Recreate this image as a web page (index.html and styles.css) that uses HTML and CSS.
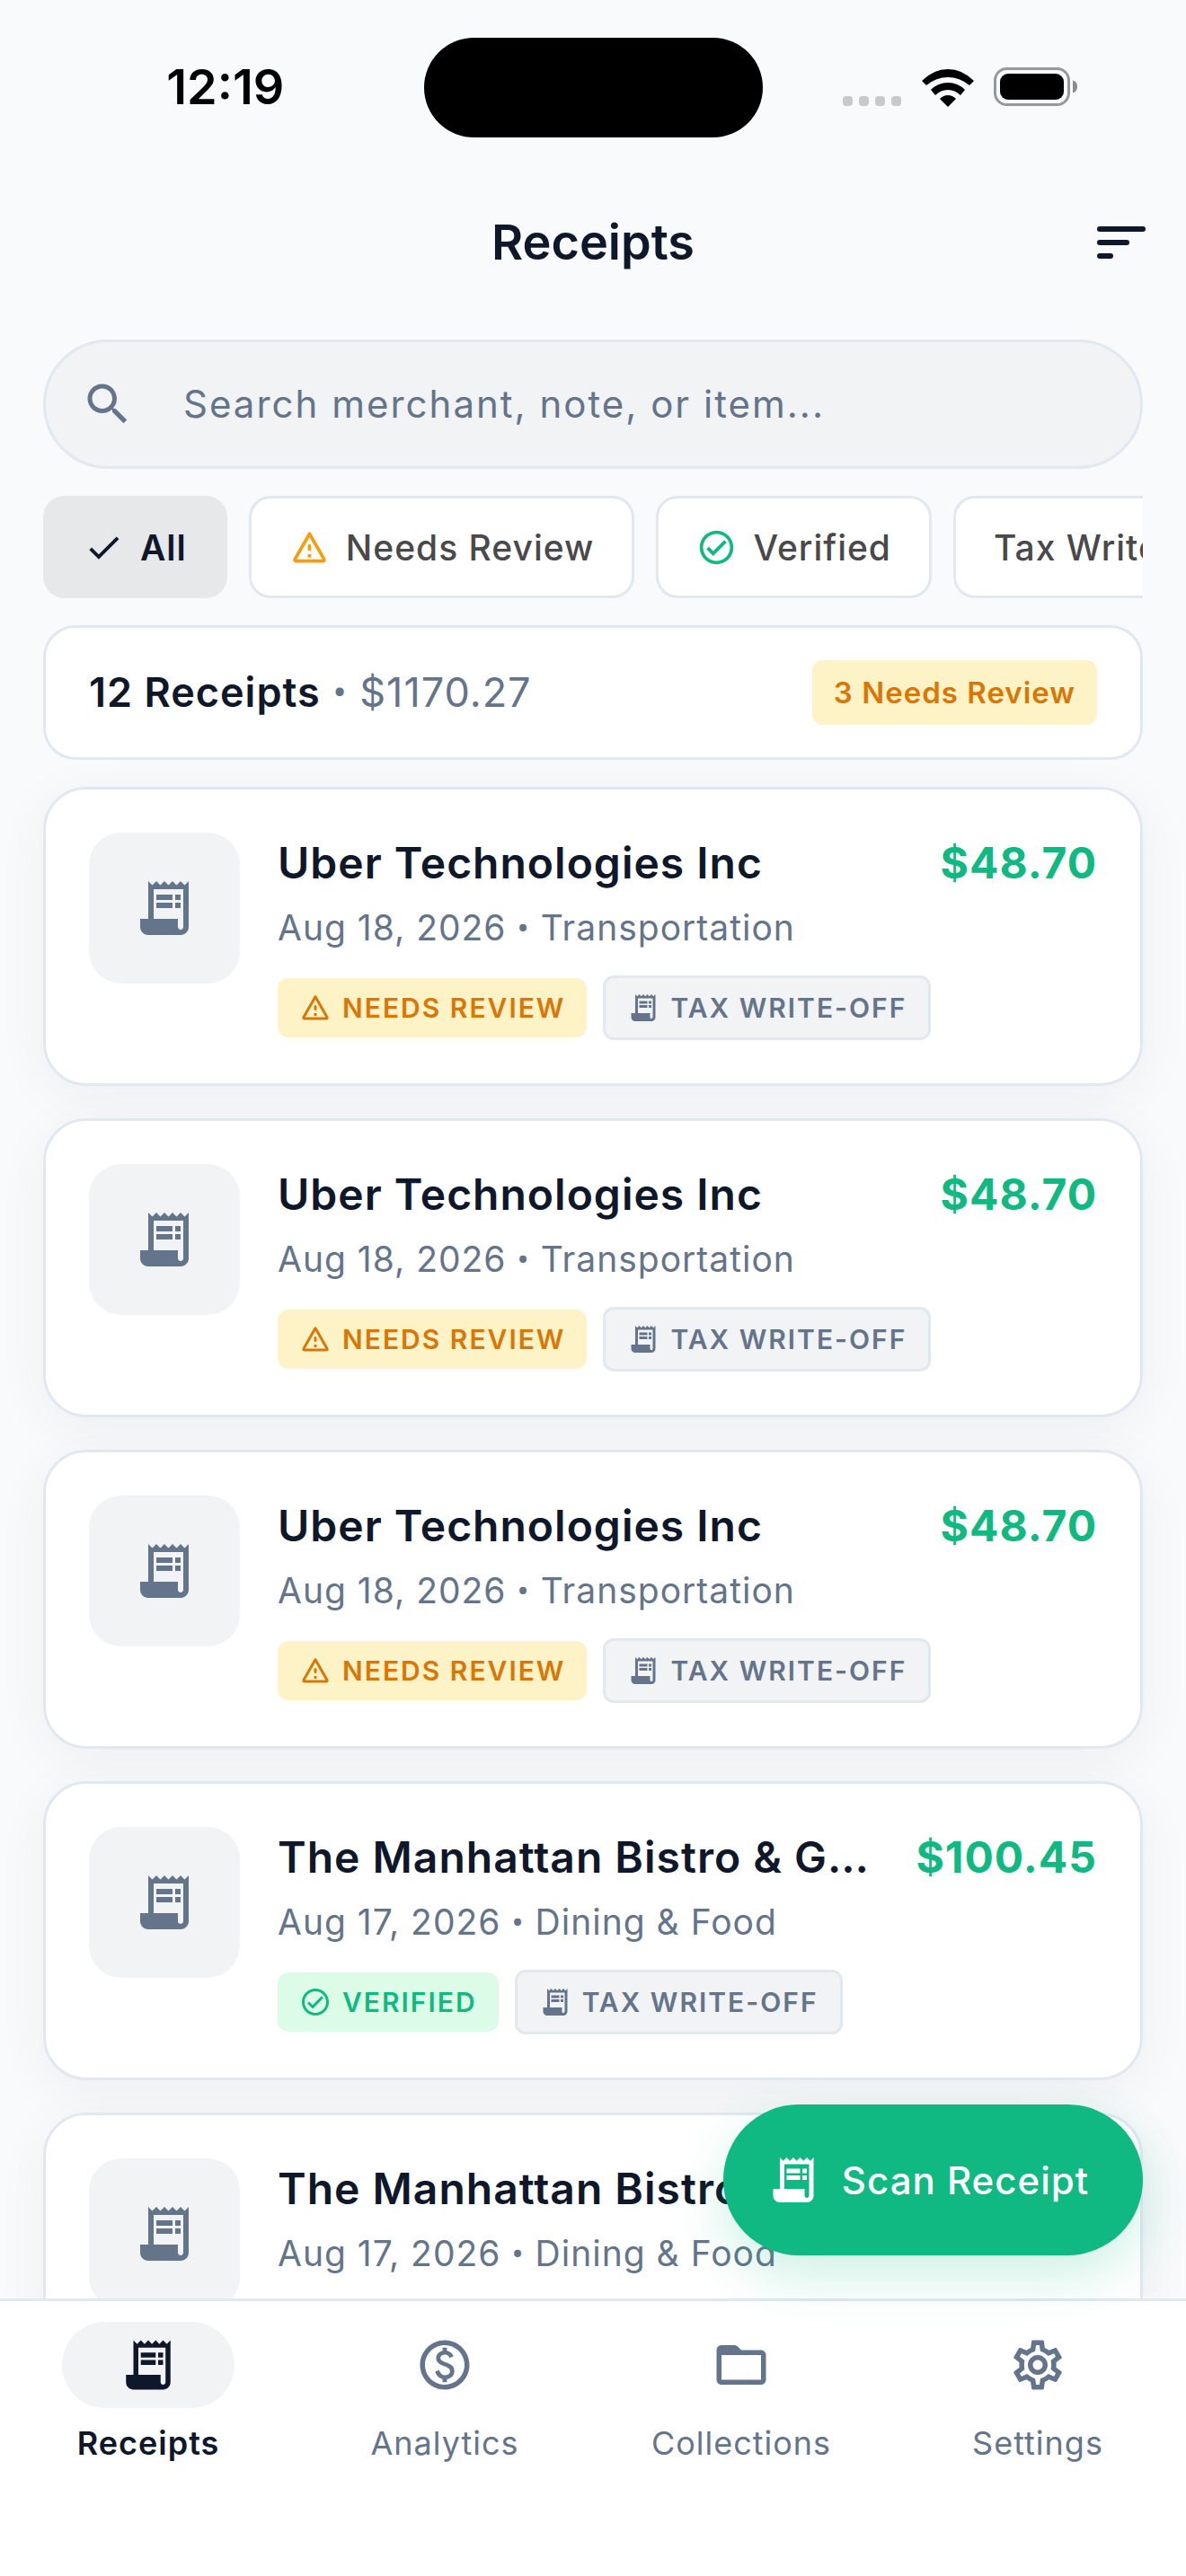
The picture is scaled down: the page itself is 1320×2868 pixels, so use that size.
FILE: index.html
```html
<!DOCTYPE html>
<html lang="en">
<head>
	<title>Receipts</title>
	<meta charset="utf-8">
	<meta name="viewport" content="width=device-width, initial-scale=1">
	<link rel="stylesheet" href="styles.css">
</head>
<body>

	<!-- shared icons -->
	<svg class="sprite" aria-hidden="true">
		<symbol id="i-receipt" viewBox="0 0 24 24">
			<path fill-rule="evenodd" d="M19.5 3.5L18 2l-1.5 1.5L15 2l-1.5 1.5L12 2l-1.5 1.5L9 2 7.5 3.5 6 2v14H3v3c0 1.66 1.34 3 3 3h12c1.66 0 3-1.34 3-3V2l-1.5 1.5zM19 19c0 .55-.45 1-1 1s-1-.45-1-1v-3H8V5h11v14z"/>
			<path d="M9 7h6v2H9zM16 7h2v2h-2zM9 10h6v2H9zM16 10h2v2h-2z"/>
		</symbol>
		<symbol id="i-warning" viewBox="0 0 24 24">
			<path d="M12 3.9L3.4 18.9q-.5 1.1.7 1.1h15.8q1.2 0 .7-1.1z" fill="none" stroke="currentColor" stroke-width="2" stroke-linejoin="round"/>
			<path d="M11 16h2v2h-2zM11 11a1 1 0 0 1 2 0v2a1 1 0 0 1-2 0z"/>
		</symbol>
		<symbol id="i-verified" viewBox="0 0 24 24">
			<path d="M12 2C6.48 2 2 6.48 2 12s4.48 10 10 10 10-4.48 10-10S17.52 2 12 2zm0 18c-4.41 0-8-3.59-8-8s3.59-8 8-8 8 3.59 8 8-3.59 8-8 8zm4.59-12.42L10 14.17l-2.59-2.58L6 13l4 4 8-8z"/>
		</symbol>
		<symbol id="i-check" viewBox="0 0 24 24">
			<path d="M9 16.17L4.83 12l-1.42 1.41L9 19 21 7l-1.41-1.41z"/>
		</symbol>
		<symbol id="i-search" viewBox="0 0 24 24">
			<path d="M15.5 14h-.79l-.28-.27C15.41 12.59 16 11.11 16 9.5 16 5.91 13.09 3 9.5 3S3 5.91 3 9.5 5.91 16 9.5 16c1.61 0 3.09-.59 4.23-1.57l.27.28v.79l5 4.99L20.49 19l-4.99-5zm-6 0C7.01 14 5 11.99 5 9.5S7.01 5 9.5 5 14 7.01 14 9.5 11.99 14 9.5 14z"/>
		</symbol>
	</svg>

	<header class="status">
		<span class="clock">12:19</span>
		<span class="island"></span>
		<span class="signals">
			<svg class="dots" viewBox="0 0 66 12"><rect width="11" height="11" rx="4"/><rect x="18" width="11" height="11" rx="4"/><rect x="36" width="11" height="11" rx="4"/><rect x="54" width="11" height="11" rx="4"/></svg>
			<svg class="wifi" viewBox="0 0 58 42"><path d="M0 13Q13 0 29 0t29 13l-5 5Q42 9 29 9T5 18zM10 23Q18 15 29 15t19 8l-5 6Q37 23 29 23t-14 6zM20 33q4-4 9-4t9 4l-9 9z"/></svg>
			<svg class="battery" viewBox="0 0 94 44"><rect x="1.5" y="1.5" width="82" height="40" rx="13" fill="none" stroke="#97989a" stroke-width="3"/><rect x="7" y="7" width="71" height="29" rx="9"/><path d="M88 14.500q5 1.500 5 7t-5 7z" fill="#8a8b8d"/></svg>
		</span>
	</header>

	<div class="appbar">
		<h1>Receipts</h1>
		<button class="sort" aria-label="Sort">
			<svg viewBox="0 0 24 24"><rect x="3" y="6" width="18" height="2" rx="1"/><rect x="3" y="11" width="12" height="2" rx="1"/><rect x="3" y="16" width="6" height="2" rx="1"/></svg>
		</button>
	</div>

	<main>
		<label class="search">
			<svg><use href="#i-search"/></svg>
			<input type="text" placeholder="Search merchant, note, or item..." aria-label="Search receipts">
		</label>

		<div class="chips">
			<button class="chip on"><svg><use href="#i-check"/></svg>All</button>
			<button class="chip"><svg class="amber"><use href="#i-warning"/></svg>Needs Review</button>
			<button class="chip"><svg class="green"><use href="#i-verified"/></svg>Verified</button>
			<button class="chip">Tax Write-Off</button>
		</div>

		<div class="summary">
			<p><b>12 Receipts</b> <i>•</i> $1170.27</p>
			<span class="pill">3 Needs Review</span>
		</div>

		<div class="list">
			<article class="card">
				<div class="thumb"><svg><use href="#i-receipt"/></svg></div>
				<div class="info">
					<div class="top"><h2>Uber Technologies Inc</h2><span class="price">$48.70</span></div>
					<p class="meta">Aug 18, 2026 <i>•</i> Transportation</p>
					<div class="tags">
						<span class="tag review"><svg><use href="#i-warning"/></svg>NEEDS REVIEW</span>
						<span class="tag tax"><svg><use href="#i-receipt"/></svg>TAX WRITE-OFF</span>
					</div>
				</div>
			</article>
			<article class="card">
				<div class="thumb"><svg><use href="#i-receipt"/></svg></div>
				<div class="info">
					<div class="top"><h2>Uber Technologies Inc</h2><span class="price">$48.70</span></div>
					<p class="meta">Aug 18, 2026 <i>•</i> Transportation</p>
					<div class="tags">
						<span class="tag review"><svg><use href="#i-warning"/></svg>NEEDS REVIEW</span>
						<span class="tag tax"><svg><use href="#i-receipt"/></svg>TAX WRITE-OFF</span>
					</div>
				</div>
			</article>
			<article class="card">
				<div class="thumb"><svg><use href="#i-receipt"/></svg></div>
				<div class="info">
					<div class="top"><h2>Uber Technologies Inc</h2><span class="price">$48.70</span></div>
					<p class="meta">Aug 18, 2026 <i>•</i> Transportation</p>
					<div class="tags">
						<span class="tag review"><svg><use href="#i-warning"/></svg>NEEDS REVIEW</span>
						<span class="tag tax"><svg><use href="#i-receipt"/></svg>TAX WRITE-OFF</span>
					</div>
				</div>
			</article>
			<article class="card">
				<div class="thumb"><svg><use href="#i-receipt"/></svg></div>
				<div class="info">
					<div class="top"><h2>The Manhattan Bistro &amp; Grill House</h2><span class="price">$100.45</span></div>
					<p class="meta">Aug 17, 2026 <i>•</i> Dining &amp; Food</p>
					<div class="tags">
						<span class="tag verified"><svg><use href="#i-verified"/></svg>VERIFIED</span>
						<span class="tag tax"><svg><use href="#i-receipt"/></svg>TAX WRITE-OFF</span>
					</div>
				</div>
			</article>
			<article class="card">
				<div class="thumb"><svg><use href="#i-receipt"/></svg></div>
				<div class="info">
					<div class="top"><h2>The Manhattan Bistro &amp; Grill House</h2><span class="price">$100.45</span></div>
					<p class="meta">Aug 17, 2026 <i>•</i> Dining &amp; Food</p>
				</div>
			</article>
		</div>
	</main>

	<nav class="tabs">
		<button class="fab"><svg><use href="#i-receipt"/></svg>Scan Receipt</button>
		<a href="#receipts" class="tab on">
			<span class="ico"><svg><use href="#i-receipt"/></svg></span>
			Receipts
		</a>
		<a href="#analytics" class="tab">
			<span class="ico"><svg viewBox="0 0 24 24"><path d="M12 2C6.48 2 2 6.48 2 12s4.480 10 10 10 10-4.480 10-10S17.520 2 12 2zm0 18c-4.410 0-8-3.590-8-8s3.590-8 8-8 8 3.590 8 8-3.590 8-8 8zm.89-8.900c-1.780-.590-2.640-.960-2.640-1.900 0-1.020 1.110-1.390 1.810-1.390 1.310 0 1.790.990 1.900 1.340l1.580-.670c-.150-.440-.820-1.910-2.660-2.230V5h-1.750v1.260c-2.600.560-2.620 2.850-2.620 2.960 0 2.270 2.250 2.910 3.350 3.310 1.580.560 2.280 1.070 2.280 2.030 0 1.130-1.050 1.610-1.980 1.610-1.820 0-2.340-1.870-2.400-2.090L8.100 14.750c.630 2.190 2.280 2.780 3.020 2.960V19h1.750v-1.240c.520-.090 3.020-.590 3.020-3.220.010-1.390-.600-2.610-3-3.440z"/></svg></span>
			Analytics
		</a>
		<a href="#collections" class="tab">
			<span class="ico"><svg viewBox="0 0 24 24"><path d="M20 6h-8l-1.410-1.410C10.210 4.210 9.700 4 9.170 4H4c-1.100 0-1.990.900-1.990 2L2 18c0 1.100.900 2 2 2h16c1.100 0 2-.900 2-2V8c0-1.100-.900-2-2-2zm0 12H4V8h16v10z"/></svg></span>
			Collections
		</a>
		<a href="#settings" class="tab">
			<span class="ico"><svg viewBox="0 0 24 24"><path d="M19.430 12.980c.040-.320.070-.640.070-.980s-.030-.660-.070-.980l2.110-1.650c.190-.150.240-.420.120-.640l-2-3.460c-.090-.160-.260-.250-.440-.250-.060 0-.120.010-.170.030l-2.490 1c-.520-.400-1.080-.730-1.690-.980l-.380-2.650C14.460 2.180 14.250 2 14 2h-4c-.250 0-.460.180-.490.420l-.380 2.650c-.610.250-1.170.590-1.690.980l-2.490-1c-.060-.020-.120-.030-.180-.030-.170 0-.340.090-.430.250l-2 3.460c-.130.220-.070.490.120.640l2.110 1.650c-.040.320-.070.650-.070.980s.030.660.070.980l-2.110 1.650c-.190.150-.240.420-.120.640l2 3.460c.090.160.260.250.440.250.060 0 .120-.010.170-.030l2.490-1c.520.400 1.080.730 1.690.980l.380 2.650c.030.240.240.420.490.420h4c.250 0 .460-.180.490-.420l.380-2.650c.610-.250 1.170-.590 1.690-.980l2.490 1c.060.020.120.030.180.030.170 0 .340-.090.430-.250l2-3.460c.120-.220.070-.490-.120-.640l-2.110-1.650zm-1.980-1.710c.040.310.050.520.050.730s-.020.430-.050.730l-.140 1.130.89.700 1.080.840-.70 1.210-1.270-.510-1.040-.420-.90.680c-.430.320-.840.560-1.250.730l-1.060.430-.160 1.130-.200 1.350h-1.400l-.190-1.350-.160-1.130-1.060-.430c-.430-.180-.830-.410-1.230-.710l-.91-.70-1.060.430-1.270.510-.70-1.210 1.080-.840.89-.70-.140-1.130c-.030-.310-.050-.540-.050-.740s.020-.430.050-.730l.140-1.130-.89-.70-1.080-.840.70-1.210 1.270.510 1.040.420.90-.680c.430-.320.840-.560 1.250-.730l1.060-.430.160-1.130.200-1.350h1.390l.190 1.350.160 1.130 1.060.430c.430.180.83.410 1.230.710l.91.70 1.060-.430 1.270-.510.70 1.210-1.070.85-.89.70.140 1.130zM12 8c-2.210 0-4 1.790-4 4s1.790 4 4 4 4-1.790 4-4-1.790-4-4-4zm0 6c-1.100 0-2-.90-2-2s.90-2 2-2 2 .90 2 2-.90 2-2 2z"/></svg></span>
			Settings
		</a>
	</nav>

</body>
</html>
```

FILE: styles.css
```css
*, *:before, *:after { box-sizing:border-box; }

body {
	margin:0; height:100vh; overflow:hidden;
	display:flex; flex-direction:column;
	background-color:#f8fafc; color:#0f172a;
	font-family: Inter, "Liberation Sans", sans-serif;
	letter-spacing:1px;
}

h1, h2, p { margin:0; }
svg { display:block; flex:none; fill:currentColor; }
button, input { font:inherit; letter-spacing:inherit; color:inherit; border:0; background:none; padding:0; margin:0; }
a { color:inherit; text-decoration:none; }
i { font-family:Roboto, sans-serif; font-style:normal; line-height:1; }
.sprite { display:none; }

/* status bar */
.status { display:grid; grid-template-columns:1fr auto 1fr; align-items:center; height:186px; padding:8px 0 0; flex:none; color:#000; letter-spacing:0; }
.clock { font-size:54px; font-weight:600; line-height:60px; text-align:center; padding-left:30px; }
.island { width:377px; height:111px; border-radius:56px; background-color:#000; }
.signals { display:flex; align-items:flex-end; justify-content:flex-end; padding-right:120px; }
.dots { width:66px; height:12px; color:#c8c9cb; margin-right:22px; }
.wifi { width:58px; height:42px; margin-right:22px; }
.battery { width:94px; height:44px; }

/* app bar */
.appbar { display:grid; grid-template-columns:1fr auto 1fr; align-items:center; height:168px; padding:0 36px; flex:none; }
h1 { grid-column:2; font-size:54px; font-weight:600; line-height:66px; letter-spacing:0; }
.sort { justify-self:end; }
.sort svg { width:72px; height:72px; }

main { flex:1; min-height:0; display:flex; flex-direction:column; padding-top:24px; }
.search, .chips, .summary { margin:0 48px 30px; flex:none; }

.search {
	display:flex; align-items:center; gap:54px; height:144px; padding:0 39px;
	border:3px solid #e2e8f0; border-radius:72px; background-color:#f1f3f5; color:#64748b;
}
.search svg { width:60px; height:60px; }
.search input { flex:1; min-width:0; font-size:42px; line-height:60px; letter-spacing:2px; outline:0; }
.search input::placeholder { color:#64748b; opacity:1; }

.chips { display:flex; gap:24px; overflow:hidden; }
.chip {
	display:flex; align-items:center; gap:18px; flex:none; height:114px; padding:0 42px;
	border:3px solid #e2e8f0; border-radius:24px; background-color:#fff; color:#49494b;
	font-size:39px; font-weight:500; white-space:nowrap;
}
.chip svg { width:45px; height:45px; }
.chip.on { background-color:#e6e8ea; border-color:#e6e8ea; color:#0f172a; font-weight:600; }
.amber { color:#f59e0b; }
.green { color:#10b981; }

.summary {
	display:flex; align-items:center; justify-content:space-between; height:150px; padding:0 48px; margin-bottom:0;
	border:3px solid #e2e8f0; border-radius:36px; background-color:#fff;
}
.summary p { font-size:45px; line-height:60px; color:#64748b; }
.summary b { font-weight:600; color:#0f172a; }
.pill { padding:0 24px; border-radius:12px; background-color:#fef3c7; color:#d97706; font-size:33px; font-weight:600; line-height:72px; }

/* receipts */
.list { flex:1; min-height:0; overflow:hidden; padding:30px 48px 0; display:flex; flex-direction:column; gap:36px; }
.card {
	display:flex; gap:42px; flex:none; padding:48px;
	border:3px solid #e2e8f0; border-radius:48px; background-color:#fff;
	box-shadow:0 12px 60px rgba(15,23,42,.05);
}
.thumb { width:168px; height:168px; flex:none; display:flex; align-items:center; justify-content:center; border-radius:36px; background-color:#f1f3f5; color:#64748b; }
.thumb svg { width:72px; height:72px; }
.info { flex:1; min-width:0; }
.top { display:flex; justify-content:space-between; gap:36px; font-size:48px; line-height:68px; }
h2 { min-width:0; font-size:48px; font-weight:600; overflow:hidden; text-overflow:ellipsis; white-space:nowrap; }
.price { font-weight:700; color:#10b981; }
.meta { margin:10px 0 26px; font-size:39px; line-height:55px; color:#64748b; }
.tags { display:flex; align-items:center; gap:18px; }
.tag { display:flex; align-items:center; gap:12px; padding:0 24px; border-radius:12px; font-size:30px; font-weight:600; line-height:66px; letter-spacing:2px; }
.tag svg { width:36px; height:36px; }
.review { background-color:#fef3c7; color:#d97706; }
.verified { background-color:#dcfce7; color:#10b981; }
.tax { border:3px solid #e2e8f0; background-color:#f1f3f5; color:#64748b; }

/* bottom tabs, the scan button floats above them */
.tabs { position:relative; flex:none; display:grid; grid-template-columns:repeat(4, 1fr); height:309px; padding-top:23px; border-top:3px solid #e2e8f0; background-color:#fff; }
.tab { display:flex; flex-direction:column; align-items:center; gap:12px; font-size:36px; font-weight:400; line-height:54px; color:#64748b; }
.tab.on { font-weight:600; color:#0f172a; }
.ico { width:192px; height:96px; display:flex; align-items:center; justify-content:center; border-radius:48px; }
.ico svg { width:66px; height:66px; }
.on .ico { background-color:#f1f3f5; }
.fab {
	position:absolute; right:48px; bottom:calc(100% + 51px);
	display:flex; align-items:center; gap:24px; height:168px; padding:0 60px 0 48px; border-radius:84px;
	background-color:#10b981; color:#fff; font-size:42px; font-weight:500;
	box-shadow:0 24px 60px rgba(16,185,129,.2);
}
.fab svg { width:60px; height:60px; }
```
